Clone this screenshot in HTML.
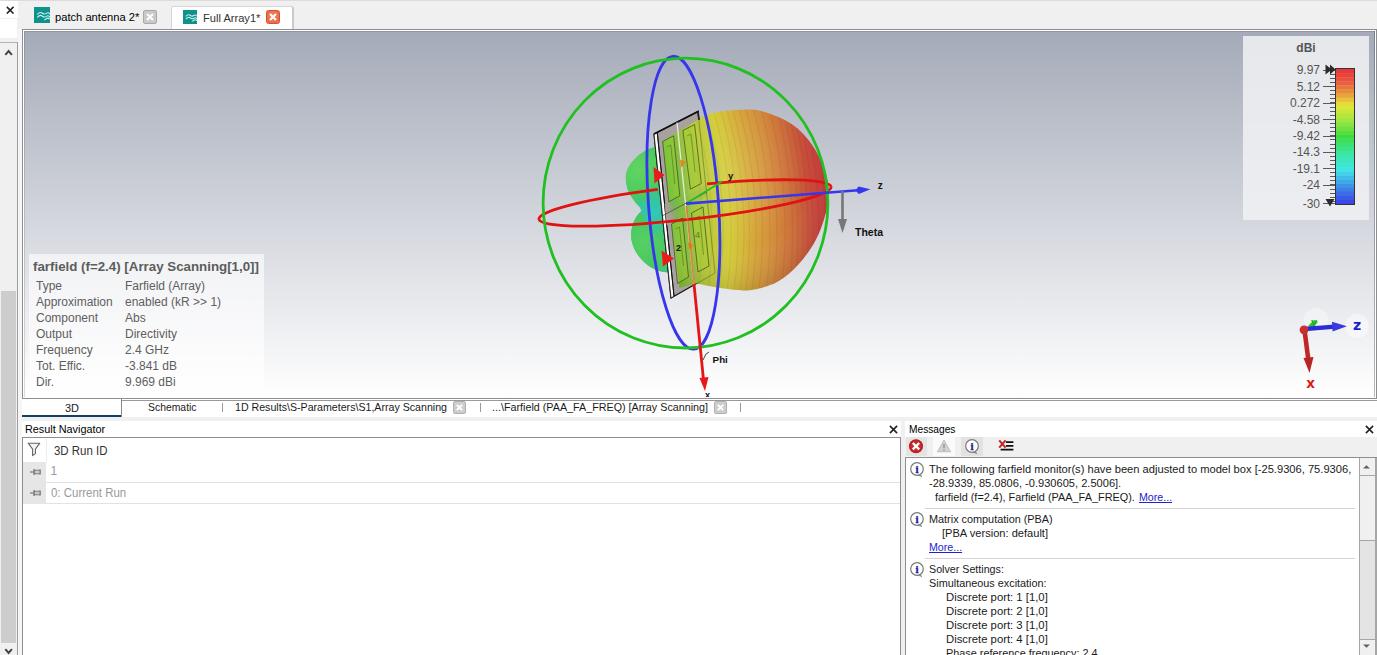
<!DOCTYPE html>
<html>
<head>
<meta charset="utf-8">
<title>Full Array1</title>
<style>
*{box-sizing:border-box;margin:0;padding:0}
html,body{width:1377px;height:655px;overflow:hidden;background:#f0f0f0;font-family:"Liberation Sans","DejaVu Sans",sans-serif;font-size:11px;color:#000}
.abs{position:absolute}
.t{position:absolute;white-space:nowrap;line-height:1;transform-origin:0 50%}
#root{position:relative;width:1377px;height:655px;overflow:hidden;background:#f0f0f0}
/* top tabs */
#topline{left:0;top:0;width:1377px;height:1px;background:#dcdcdc}
.tabtxt{font-size:11px;top:12px;color:#000}
/* viewport */
#vp{left:22px;top:29px;width:1355px;height:370px;border:1px solid #8e8e8e;background:#fff}
#vpin{left:1px;top:1px;width:1351px;height:366px;border:0;background:linear-gradient(to bottom,#a4aab8 0%,#ffffff 100%);overflow:hidden;box-shadow:inset 1px 1px 0 rgba(40,45,70,0.16), inset -1px 0 0 rgba(40,45,70,0.35)}
/* bottom tabs */
#btabs{left:22px;top:399px;width:1355px;height:18px;background:#fff}
.btxt{font-size:11px;top:402px;color:#1a1a1a}
/* panels */
.phead{font-size:11px;color:#000}
.cell{font-size:12px;color:#9a9a9a}
.msg{font-size:11px;color:#1a1a1a;line-height:14px;position:absolute;white-space:nowrap}
.lnk{color:#2222cc;text-decoration:underline}
.sx{display:inline-block;transform-origin:0 50%;transform:scaleX(1.012)}
.info td{font-size:12px;color:#5e5e5e;padding:0;height:16px;line-height:16px;white-space:nowrap}
</style>
</head>
<body>
<div id="root">
  <!-- top strip -->
  <div class="abs" id="topline"></div>
  <div class="abs" style="left:0;top:1px;width:18px;height:17px;background:#fff"></div>
  <div class="abs" style="left:0;top:19px;width:17px;height:19px;background:#fff"></div>
  <svg class="abs" style="left:5.8px;top:5.8px" width="8.4" height="8.4" viewBox="0 0 9 9"><path d="M0.9 0.9 L8.1 8.1 M8.1 0.9 L0.9 8.1" stroke="#222" stroke-width="1.7" fill="none"/></svg>

  <!-- left scrollbar -->
  <div class="abs" style="left:0;top:42px;width:18px;height:613px;background:#f0f0f0;border-right:1px solid #9c9c9c;border-top:1px solid #b4b4b4"></div>
  <div class="abs" style="left:18px;top:29px;width:4px;height:626px;background:#f5f5f5"></div>
  <div class="abs" style="left:1px;top:291px;width:15px;height:352px;background:#cdcdcd"></div>
  <svg class="abs" style="left:4px;top:48.5px" width="9" height="7" viewBox="0 0 9 7"><path d="M1.3 5.8 L4.6 2 L7.9 5.8" stroke="#444" stroke-width="2" fill="none"/></svg>
  <svg class="abs" style="left:4px;top:648px" width="9" height="7" viewBox="0 0 9 7"><path d="M1.3 1.2 L4.6 5 L7.9 1.2" stroke="#444" stroke-width="2" fill="none"/></svg>

  <!-- top tabs -->
  <div class="abs" style="left:171px;top:6px;width:123px;height:23px;background:#fff;border:1px solid #d6d6d6;border-right:2px solid #c9c9c9;border-bottom:0;border-radius:2px 3px 0 0"></div>
  <div class="abs icon" style="left:34px;top:7px;width:16px;height:16px;background:#11918b"></div>
  <svg class="abs" style="left:34px;top:7px" width="16" height="16" viewBox="0 0 16 16"><path d="M3.2 7.3 C4.4 6.2 5.6 5.3 6.8 5.5 C8.2 5.8 9.2 7.2 10.7 7 C12 6.8 12.8 5.8 13.9 5.8 C14.8 5.8 15.4 6.5 16 7 M3.2 10.3 C4.4 9.2 5.6 8.2 6.8 8.4 C8.2 8.7 9.2 10.2 10.7 10 C12 9.8 12.8 8.8 13.9 8.8 C14.8 8.8 15.4 9.5 16 10 M10.2 13 C11.4 12.6 12.6 11.1 13.9 11.1 C14.8 11.1 15.4 11.7 16 12.2" stroke="#c6f6f2" stroke-width="1.1" fill="none"/></svg>
  <div class="t tabtxt" style="left:54.5px;transform:scaleX(1.014)">patch antenna 2*</div>
  <div class="abs" style="left:143px;top:10px;width:14px;height:14px;background:#c9c9c9;border:1px solid #a9a9a9;border-radius:2px"></div>
  <svg class="abs" style="left:143px;top:10px" width="14" height="14" viewBox="0 0 14 14"><path d="M4 4 L10 10 M10 4 L4 10" stroke="#fff" stroke-width="2" fill="none"/></svg>

  <div class="abs icon" style="left:183px;top:10px;width:14px;height:14px;background:#11918b"></div>
  <svg class="abs" style="left:183px;top:10px" width="14" height="14" viewBox="0 0 16 16"><path d="M3.2 7.3 C4.4 6.2 5.6 5.3 6.8 5.5 C8.2 5.8 9.2 7.2 10.7 7 C12 6.8 12.8 5.8 13.9 5.8 C14.8 5.8 15.4 6.5 16 7 M3.2 10.3 C4.4 9.2 5.6 8.2 6.8 8.4 C8.2 8.7 9.2 10.2 10.7 10 C12 9.8 12.8 8.8 13.9 8.8 C14.8 8.8 15.4 9.5 16 10 M10.2 13 C11.4 12.6 12.6 11.1 13.9 11.1 C14.8 11.1 15.4 11.7 16 12.2" stroke="#c6f6f2" stroke-width="1.2" fill="none"/></svg>
  <div class="t tabtxt" style="left:202.8px;top:13px;color:#333;transform:scaleX(1.01)">Full Array1*</div>
  <div class="abs" style="left:266px;top:10px;width:14px;height:14px;background:radial-gradient(circle at 50% 45%,#f28c62 0%,#e9694a 75%);border:1px solid #d2522f;border-radius:2.5px"></div>
  <svg class="abs" style="left:266px;top:10px" width="14" height="14" viewBox="0 0 14 14"><path d="M4 4 L10 10 M10 4 L4 10" stroke="#fff" stroke-width="2" fill="none"/></svg>

  <!-- viewport -->
  <div class="abs" id="vp">
    <div class="abs" id="vpin">
      <svg class="abs" style="left:0;top:0" width="1351" height="366" viewBox="24 31 1351 366">
<defs>
  <radialGradient id="lobeG" gradientUnits="userSpaceOnUse" cx="300" cy="232" r="530">
    <stop offset="0.68" stop-color="#48b848"/>
    <stop offset="0.70" stop-color="#5cbc3e"/>
    <stop offset="0.738" stop-color="#98c83a"/>
    <stop offset="0.768" stop-color="#b8ca3a"/>
    <stop offset="0.811" stop-color="#d4cc3a"/>
    <stop offset="0.837" stop-color="#d6b83a"/>
    <stop offset="0.860" stop-color="#d6a43a"/>
    <stop offset="0.886" stop-color="#d4923c"/>
    <stop offset="0.915" stop-color="#d07a3a"/>
    <stop offset="0.940" stop-color="#ca663a"/>
    <stop offset="0.958" stop-color="#c8523a"/>
    <stop offset="0.979" stop-color="#c6403a"/>
    <stop offset="1" stop-color="#be3838"/>
  </radialGradient>
  <radialGradient id="lobeS" gradientUnits="userSpaceOnUse" cx="735" cy="175" r="120">
    <stop offset="0" stop-color="#fff" stop-opacity="0.10"/>
    <stop offset="0.6" stop-color="#fff" stop-opacity="0"/>
    <stop offset="1" stop-color="#000" stop-opacity="0.12"/>
  </radialGradient>
  <radialGradient id="backG1" gradientUnits="userSpaceOnUse" cx="638" cy="170" r="42">
    <stop offset="0" stop-color="#62d462"/>
    <stop offset="0.6" stop-color="#4ccb5e"/>
    <stop offset="1" stop-color="#3cc27a"/>
  </radialGradient>
  <radialGradient id="backG2" gradientUnits="userSpaceOnUse" cx="645" cy="242" r="42">
    <stop offset="0" stop-color="#56d062"/>
    <stop offset="0.6" stop-color="#48c862"/>
    <stop offset="1" stop-color="#3cc288"/>
  </radialGradient>
  <radialGradient id="cyanR" gradientUnits="userSpaceOnUse" cx="654" cy="212" r="30"><stop offset="0" stop-color="#2ec8c0" stop-opacity="0.95"/><stop offset="0.55" stop-color="#30c6a8" stop-opacity="0.7"/><stop offset="1" stop-color="#38c480" stop-opacity="0"/></radialGradient>
  <linearGradient id="barFade" gradientUnits="userSpaceOnUse" x1="665" y1="214" x2="679" y2="208"><stop offset="0" stop-color="#a9a19f" stop-opacity="1"/><stop offset="0.45" stop-color="#a0a08a" stop-opacity="0.8"/><stop offset="1" stop-color="#98a070" stop-opacity="0"/></linearGradient>
  <linearGradient id="cyanG" gradientUnits="userSpaceOnUse" x1="640" y1="190" x2="660" y2="225">
    <stop offset="0" stop-color="#35c79a" stop-opacity="0"/>
    <stop offset="0.5" stop-color="#2ec7b4" stop-opacity="0.9"/>
    <stop offset="1" stop-color="#35c79a" stop-opacity="0"/>
  </linearGradient>
  <linearGradient id="barG" x1="0" y1="0" x2="0" y2="1">
    <stop offset="0" stop-color="#e8323c"/>
    <stop offset="0.10" stop-color="#ea5a3c"/>
    <stop offset="0.18" stop-color="#e8963c"/>
    <stop offset="0.27" stop-color="#e6e63c"/>
    <stop offset="0.38" stop-color="#a0e63c"/>
    <stop offset="0.50" stop-color="#3cdc3c"/>
    <stop offset="0.62" stop-color="#3ce6a0"/>
    <stop offset="0.74" stop-color="#3ce6e6"/>
    <stop offset="0.85" stop-color="#3c96e6"/>
    <stop offset="1" stop-color="#3c3ce6"/>
  </linearGradient>
</defs>

<!-- back lobes -->
<path d="M660 146 C648 147 636 155 629 166 C623.5 175 625 188 632 198 C636 204 640 207 643 210 C637 214 632 222 631 234 C631 248 640 261 652 268 C660 272 666 273 671 272 L678 250 L672 150 Z" fill="url(#backG1)"/>
<path d="M643 210 C637 214 632 222 631 234 C631 248 640 261 652 268 C660 272 666 273 671 272 L678 250 L670 205 Z" fill="url(#backG2)"/>
<path d="M636 193 C641 199 645 203 649 204 L652 178 L660 170 L668 245 C658 240 648 228 642 214 C640 208 637 200 636 193 Z" fill="url(#cyanR)"/>
<!-- panel -->
<polygon points="654,134 698,111.5 715,273 671,298" fill="#a9a19f" stroke="#111" stroke-width="1.2" stroke-linejoin="miter"/>

<!-- main lobe -->
<path d="M699.0 119.0 C701.3 118.0 706.7 114.5 713.0 113.0 C719.3 111.5 729.0 110.3 737.0 110.0 C745.0 109.7 751.9 108.7 761.0 111.0 C770.1 113.3 783.1 118.4 791.6 124.0 C800.1 129.6 806.6 137.2 812.0 144.7 C817.4 152.1 821.2 161.3 824.0 168.7 C826.8 176.1 828.2 181.6 828.5 189.0 C828.8 196.4 828.0 204.4 825.8 213.0 C823.6 221.6 820.1 231.9 815.5 240.5 C810.9 249.1 804.6 257.6 798.4 264.5 C792.1 271.4 785.4 277.4 778.0 281.6 C770.6 285.8 760.9 288.1 754.0 289.5 C747.1 290.9 743.6 290.5 736.8 290.0 C730.0 289.5 719.8 287.8 713.0 286.7 C706.2 285.6 698.7 283.9 695.8 283.3 L679.5 288 L662.5 141.5 Z" fill="url(#lobeG)"/>
<path d="M699.0 119.0 C701.3 118.0 706.7 114.5 713.0 113.0 C719.3 111.5 729.0 110.3 737.0 110.0 C745.0 109.7 751.9 108.7 761.0 111.0 C770.1 113.3 783.1 118.4 791.6 124.0 C800.1 129.6 806.6 137.2 812.0 144.7 C817.4 152.1 821.2 161.3 824.0 168.7 C826.8 176.1 828.2 181.6 828.5 189.0 C828.8 196.4 828.0 204.4 825.8 213.0 C823.6 221.6 820.1 231.9 815.5 240.5 C810.9 249.1 804.6 257.6 798.4 264.5 C792.1 271.4 785.4 277.4 778.0 281.6 C770.6 285.8 760.9 288.1 754.0 289.5 C747.1 290.9 743.6 290.5 736.8 290.0 C730.0 289.5 719.8 287.8 713.0 286.7 C706.2 285.6 698.7 283.9 695.8 283.3 L679.5 288 L662.5 141.5 Z" fill="url(#lobeS)"/>
<clipPath id="lobeClip"><path d="M699.0 119.0 C701.3 118.0 706.7 114.5 713.0 113.0 C719.3 111.5 729.0 110.3 737.0 110.0 C745.0 109.7 751.9 108.7 761.0 111.0 C770.1 113.3 783.1 118.4 791.6 124.0 C800.1 129.6 806.6 137.2 812.0 144.7 C817.4 152.1 821.2 161.3 824.0 168.7 C826.8 176.1 828.2 181.6 828.5 189.0 C828.8 196.4 828.0 204.4 825.8 213.0 C823.6 221.6 820.1 231.9 815.5 240.5 C810.9 249.1 804.6 257.6 798.4 264.5 C792.1 271.4 785.4 277.4 778.0 281.6 C770.6 285.8 760.9 288.1 754.0 289.5 C747.1 290.9 743.6 290.5 736.8 290.0 C730.0 289.5 719.8 287.8 713.0 286.7 C706.2 285.6 698.7 283.9 695.8 283.3 L679.5 288 L662.5 141.5 Z"/></clipPath>
<g clip-path="url(#lobeClip)" fill="none" stroke="#3a2a10" stroke-opacity="0.07" stroke-width="1.2"><circle cx="300" cy="232" r="402" /><circle cx="300" cy="232" r="412" /><circle cx="300" cy="232" r="423" /><circle cx="300" cy="232" r="431" /><circle cx="300" cy="232" r="438" /><circle cx="300" cy="232" r="444" /><circle cx="300" cy="232" r="449.6" /><circle cx="300" cy="232" r="456" /><circle cx="300" cy="232" r="462.5" /><circle cx="300" cy="232" r="470" /><circle cx="300" cy="232" r="477" /><circle cx="300" cy="232" r="485" /><circle cx="300" cy="232" r="492.6" /><circle cx="300" cy="232" r="498" /><circle cx="300" cy="232" r="503" /><circle cx="300" cy="232" r="508" /><circle cx="300" cy="232" r="513" /><circle cx="300" cy="232" r="519" /><circle cx="300" cy="232" r="525.7" /></g>

<!-- panel edges -->
<polygon points="654,134 657.2,132.6 674,296.2 671,298" fill="#fff" stroke="#111" stroke-width="0.8"/>
<polyline points="654,134 698,111.5 699,120" fill="none" stroke="#111" stroke-width="1.6"/>
<line x1="657.4" y1="132.8" x2="674" y2="296" stroke="#111" stroke-width="1"/>
<!-- substrate seen through lobe: strips between patches -->
<polygon points="674.5,135 682,131 698,281 690,285" fill="#8fa070" opacity="0.22"/>
<polygon points="664,208 707,185 708,196 665,219" fill="#8fa070" opacity="0.18"/>
<polygon points="664.6,204 677,197.5 679,219 666.8,225.5" fill="url(#barFade)"/>
<!-- centre split lines -->
<line x1="677" y1="122.5" x2="694" y2="285" stroke="#f0f4d8" stroke-width="1.3" opacity="0.9"/>
<line x1="663" y1="215.5" x2="707" y2="192" stroke="#3d4d1f" stroke-width="0.9" opacity="0.8"/>
<!-- patches -->
<g fill="#a6cc33" fill-opacity="0.4" stroke="#33451a" stroke-width="0.9" stroke-opacity="0.75">
  <polygon points="662.7,141.5 673.6,135.8 679.8,195.8 668.8,201.8"/>
  <polygon points="682.9,130.5 694.6,124.5 701.3,183.5 690.4,189.2"/>
  <polygon points="671.5,224 682.5,218 688.5,277 677.5,283.5"/>
  <polygon points="691.5,213 703,207 709,266 698,272"/>
</g>
<g fill="none" stroke="#3a4d1c" stroke-width="0.8" stroke-opacity="0.55">
  <polyline points="698,111.5 715,273 697,283.5"/>
  <polyline points="666.8,147 670.8,145 674.8,184"/>
  <polyline points="687,136 691,134 695,172"/>
  <polyline points="675.5,229 679.5,227 683.5,266"/>
  <polyline points="695.5,218 699.5,216 703.5,255"/>
</g>

<!-- port arrows -->
<polygon points="653.5,167 664.5,175 654.5,183.5" fill="#e81c1c"/>
<polygon points="661.5,250.5 674,258.5 663,266.5" fill="#e81c1c"/>
<polygon points="680,159.5 686,162 681,167.5" fill="#e08a1c"/>
<polygon points="688,242 694,245 689.5,250" fill="#e08a1c"/>
<text x="676" y="250.5" font-family="Liberation Sans, sans-serif" font-size="9" font-weight="bold" fill="#111">2</text>
<text x="695" y="238" font-family="Liberation Sans, sans-serif" font-size="9" font-weight="bold" fill="#7a8a3a">4</text>

<!-- great circles -->
<ellipse cx="683.4" cy="202.7" rx="35" ry="146.8" transform="rotate(-4.1 683.4 202.7)" fill="none" stroke="#3636ee" stroke-width="2.8"/>
<g transform="rotate(-6.3 685 203)" fill="none" stroke="#e01212" stroke-width="2.8">
  <path d="M538 203 A147 16.8 0 0 1 659.5 186.5"/>
  <path d="M709 186.4 A147 16.8 0 0 1 832 203"/>
  <path d="M832 203 A147 16.8 0 0 1 538 203"/>
</g>
<ellipse cx="685.5" cy="203.1" rx="142.4" ry="144.9" fill="none" stroke="#20c020" stroke-width="2.8"/>

<!-- axes -->
<line x1="686" y1="203.5" x2="722" y2="181.5" stroke="#22c022" stroke-width="1.6"/>
<line x1="686" y1="203.6" x2="858" y2="190.3" stroke="#3636ee" stroke-width="2.6"/>
<polygon points="855.5,190.4 858.5,186.4 870.5,189.3 858.8,193.9" fill="#3636ee"/>
<line x1="686.3" y1="206" x2="694" y2="284" stroke="#d86a1c" stroke-width="1.6" opacity="0.75"/>
<line x1="694" y1="284" x2="703.5" y2="380" stroke="#e61414" stroke-width="2.8"/>
<polygon points="699.5,378 708.5,377 705,391" fill="#e81818"/>
<line x1="842.5" y1="191" x2="842.5" y2="222" stroke="#777" stroke-width="2.6"/>
<polygon points="838,219 847,219 842.5,233" fill="#777"/>
<g font-family="Liberation Sans, sans-serif" font-weight="bold" fill="#111">
  <text x="728" y="179" font-size="9.5">y</text>
  <text x="877.8" y="189.3" font-size="10">z</text>
  <text x="855" y="236" font-size="10.5">Theta</text>
  <text x="712.6" y="363.2" font-size="9.8">Phi</text>
  <text x="705" y="397.8" font-size="9">x</text>
</g>
<path d="M703 360 L706 354 L709 352" fill="none" stroke="#444" stroke-width="1"/>

<rect x="1243" y="36" width="126" height="184" fill="#eff0f3" opacity="0.88"/>
<text x="1306" y="52" text-anchor="middle" font-family="Liberation Sans, sans-serif" font-weight="bold" font-size="12" fill="#555">dBi</text>
<text x="1320" y="73.9" text-anchor="end" font-family="Liberation Sans, sans-serif" font-size="12" fill="#555">9.97</text>
<text x="1320" y="90.7" text-anchor="end" font-family="Liberation Sans, sans-serif" font-size="12" fill="#555">5.12</text>
<text x="1320" y="106.8" text-anchor="end" font-family="Liberation Sans, sans-serif" font-size="12" fill="#555">0.272</text>
<text x="1320" y="123.6" text-anchor="end" font-family="Liberation Sans, sans-serif" font-size="12" fill="#555">-4.58</text>
<text x="1320" y="139.8" text-anchor="end" font-family="Liberation Sans, sans-serif" font-size="12" fill="#555">-9.42</text>
<text x="1320" y="156.0" text-anchor="end" font-family="Liberation Sans, sans-serif" font-size="12" fill="#555">-14.3</text>
<text x="1320" y="172.7" text-anchor="end" font-family="Liberation Sans, sans-serif" font-size="12" fill="#555">-19.1</text>
<text x="1320" y="188.9" text-anchor="end" font-family="Liberation Sans, sans-serif" font-size="12" fill="#555">-24</text>
<text x="1320" y="207.5" text-anchor="end" font-family="Liberation Sans, sans-serif" font-size="12" fill="#555">-30</text>
<rect x="1336" y="69.00" width="18" height="4.39" fill="#e8383c"/>
<rect x="1336" y="73.09" width="18" height="4.39" fill="#e9443c"/>
<rect x="1336" y="77.18" width="18" height="4.39" fill="#ea503c"/>
<rect x="1336" y="81.27" width="18" height="4.39" fill="#ea5f3c"/>
<rect x="1336" y="85.36" width="18" height="4.39" fill="#e9753c"/>
<rect x="1336" y="89.45" width="18" height="4.39" fill="#e88c3c"/>
<rect x="1336" y="93.55" width="18" height="4.39" fill="#e8a53c"/>
<rect x="1336" y="97.64" width="18" height="4.39" fill="#e7c03c"/>
<rect x="1336" y="101.73" width="18" height="4.39" fill="#e6db3c"/>
<rect x="1336" y="105.82" width="18" height="4.39" fill="#dbe63c"/>
<rect x="1336" y="109.91" width="18" height="4.39" fill="#c7e63c"/>
<rect x="1336" y="114.00" width="18" height="4.39" fill="#b4e63c"/>
<rect x="1336" y="118.09" width="18" height="4.39" fill="#a1e63c"/>
<rect x="1336" y="122.18" width="18" height="4.39" fill="#88e43c"/>
<rect x="1336" y="126.27" width="18" height="4.39" fill="#6fe13c"/>
<rect x="1336" y="130.36" width="18" height="4.39" fill="#55df3c"/>
<rect x="1336" y="134.45" width="18" height="4.39" fill="#3cdc3c"/>
<rect x="1336" y="138.55" width="18" height="4.39" fill="#3cdf55"/>
<rect x="1336" y="142.64" width="18" height="4.39" fill="#3ce16f"/>
<rect x="1336" y="146.73" width="18" height="4.39" fill="#3ce488"/>
<rect x="1336" y="150.82" width="18" height="4.39" fill="#3ce6a1"/>
<rect x="1336" y="154.91" width="18" height="4.39" fill="#3ce6b1"/>
<rect x="1336" y="159.00" width="18" height="4.39" fill="#3ce6c1"/>
<rect x="1336" y="163.09" width="18" height="4.39" fill="#3ce6d2"/>
<rect x="1336" y="167.18" width="18" height="4.39" fill="#3ce6e2"/>
<rect x="1336" y="171.27" width="18" height="4.39" fill="#3cd5e6"/>
<rect x="1336" y="175.36" width="18" height="4.39" fill="#3cbfe6"/>
<rect x="1336" y="179.45" width="18" height="4.39" fill="#3ca9e6"/>
<rect x="1336" y="183.55" width="18" height="4.39" fill="#3c94e6"/>
<rect x="1336" y="187.64" width="18" height="4.39" fill="#3c80e6"/>
<rect x="1336" y="191.73" width="18" height="4.39" fill="#3c6de6"/>
<rect x="1336" y="195.82" width="18" height="4.39" fill="#3c59e6"/>
<rect x="1336" y="199.91" width="18" height="4.39" fill="#3c46e6"/>
<rect x="1335.5" y="68.5" width="19" height="136" fill="none" stroke="#333" stroke-width="1"/>
<line x1="1330" y1="70.5" x2="1335" y2="70.5" stroke="#5a5a5a" stroke-width="1"/>
<line x1="1330" y1="74.5" x2="1335" y2="74.5" stroke="#5a5a5a" stroke-width="1"/>
<line x1="1330" y1="78.5" x2="1335" y2="78.5" stroke="#5a5a5a" stroke-width="1"/>
<line x1="1330" y1="82.5" x2="1335" y2="82.5" stroke="#5a5a5a" stroke-width="1"/>
<line x1="1330" y1="86.5" x2="1335" y2="86.5" stroke="#5a5a5a" stroke-width="1"/>
<line x1="1330" y1="90.5" x2="1335" y2="90.5" stroke="#5a5a5a" stroke-width="1"/>
<line x1="1330" y1="94.5" x2="1335" y2="94.5" stroke="#5a5a5a" stroke-width="1"/>
<line x1="1330" y1="98.5" x2="1335" y2="98.5" stroke="#5a5a5a" stroke-width="1"/>
<line x1="1330" y1="102.5" x2="1335" y2="102.5" stroke="#5a5a5a" stroke-width="1"/>
<line x1="1330" y1="107.5" x2="1335" y2="107.5" stroke="#5a5a5a" stroke-width="1"/>
<line x1="1330" y1="111.5" x2="1335" y2="111.5" stroke="#5a5a5a" stroke-width="1"/>
<line x1="1330" y1="115.5" x2="1335" y2="115.5" stroke="#5a5a5a" stroke-width="1"/>
<line x1="1330" y1="119.5" x2="1335" y2="119.5" stroke="#5a5a5a" stroke-width="1"/>
<line x1="1330" y1="123.5" x2="1335" y2="123.5" stroke="#5a5a5a" stroke-width="1"/>
<line x1="1330" y1="127.5" x2="1335" y2="127.5" stroke="#5a5a5a" stroke-width="1"/>
<line x1="1330" y1="131.5" x2="1335" y2="131.5" stroke="#5a5a5a" stroke-width="1"/>
<line x1="1330" y1="135.5" x2="1335" y2="135.5" stroke="#5a5a5a" stroke-width="1"/>
<line x1="1330" y1="139.5" x2="1335" y2="139.5" stroke="#5a5a5a" stroke-width="1"/>
<line x1="1330" y1="144.5" x2="1335" y2="144.5" stroke="#5a5a5a" stroke-width="1"/>
<line x1="1330" y1="148.5" x2="1335" y2="148.5" stroke="#5a5a5a" stroke-width="1"/>
<line x1="1330" y1="152.5" x2="1335" y2="152.5" stroke="#5a5a5a" stroke-width="1"/>
<line x1="1330" y1="156.5" x2="1335" y2="156.5" stroke="#5a5a5a" stroke-width="1"/>
<line x1="1330" y1="160.5" x2="1335" y2="160.5" stroke="#5a5a5a" stroke-width="1"/>
<line x1="1330" y1="164.5" x2="1335" y2="164.5" stroke="#5a5a5a" stroke-width="1"/>
<line x1="1330" y1="168.5" x2="1335" y2="168.5" stroke="#5a5a5a" stroke-width="1"/>
<line x1="1330" y1="172.5" x2="1335" y2="172.5" stroke="#5a5a5a" stroke-width="1"/>
<line x1="1330" y1="176.5" x2="1335" y2="176.5" stroke="#5a5a5a" stroke-width="1"/>
<line x1="1330" y1="180.5" x2="1335" y2="180.5" stroke="#5a5a5a" stroke-width="1"/>
<line x1="1330" y1="184.5" x2="1335" y2="184.5" stroke="#5a5a5a" stroke-width="1"/>
<line x1="1330" y1="189.5" x2="1335" y2="189.5" stroke="#5a5a5a" stroke-width="1"/>
<line x1="1330" y1="193.5" x2="1335" y2="193.5" stroke="#5a5a5a" stroke-width="1"/>
<line x1="1330" y1="197.5" x2="1335" y2="197.5" stroke="#5a5a5a" stroke-width="1"/>
<line x1="1330" y1="201.5" x2="1335" y2="201.5" stroke="#5a5a5a" stroke-width="1"/>
<line x1="1323" y1="70.5" x2="1335" y2="70.5" stroke="#5a5a5a" stroke-width="1"/>
<line x1="1323" y1="86.5" x2="1335" y2="86.5" stroke="#5a5a5a" stroke-width="1"/>
<line x1="1323" y1="103.5" x2="1335" y2="103.5" stroke="#5a5a5a" stroke-width="1"/>
<line x1="1323" y1="119.5" x2="1335" y2="119.5" stroke="#5a5a5a" stroke-width="1"/>
<line x1="1323" y1="136.5" x2="1335" y2="136.5" stroke="#5a5a5a" stroke-width="1"/>
<line x1="1323" y1="152.5" x2="1335" y2="152.5" stroke="#5a5a5a" stroke-width="1"/>
<line x1="1323" y1="168.5" x2="1335" y2="168.5" stroke="#5a5a5a" stroke-width="1"/>
<line x1="1323" y1="185.5" x2="1335" y2="185.5" stroke="#5a5a5a" stroke-width="1"/>
<line x1="1323" y1="203.5" x2="1335" y2="203.5" stroke="#5a5a5a" stroke-width="1"/>
<polygon points="1325.5,64.5 1330,68 1330,64.5 1335.5,69.5 1330,74.5 1330,71 1325.5,74.5" fill="#2a2a2a"/>
<polygon points="1325.5,199 1334.5,199 1330,206.5" fill="#2a2a2a"/>
<!-- axis gizmo -->
<circle cx="1316" cy="320" r="12" fill="#fff" opacity="0.35"/>
<circle cx="1357" cy="326" r="12" fill="#fff" opacity="0.45"/>
<circle cx="1310" cy="384" r="11" fill="#fff" opacity="0.3"/>
<path d="M1308 326 L1314 320 L1318 322 L1312 328 Z" fill="#2fc42f"/>
<text x="1311" y="326" font-family="Liberation Sans, sans-serif" font-weight="bold" font-size="11" fill="#22b022">y</text>
<line x1="1305" y1="329" x2="1335" y2="326.6" stroke="#2b2bd8" stroke-width="4.4"/>
<polygon points="1332,321.8 1347,326.2 1332.6,331.4" fill="#3a3ae0"/>
<line x1="1304.5" y1="330" x2="1308.5" y2="361" stroke="#c02828" stroke-width="4.6"/>
<polygon points="1303.5,358 1313.5,357 1309.5,373" fill="#b82424"/>
<circle cx="1304" cy="329.8" r="4.4" fill="#c83030"/>
<text x="1357" y="330" text-anchor="middle" font-family="DejaVu Sans, sans-serif" font-weight="bold" font-size="14" fill="#1c1cd0">z</text>
<text x="1310.5" y="387.8" text-anchor="middle" font-family="DejaVu Sans, sans-serif" font-weight="bold" font-size="13.5" fill="#e01818">x</text>

</svg>

    </div>
  </div>
  <div class="abs" style="left:29px;top:254px;width:235px;height:139px;background:rgba(255,255,255,0.62)"></div>
<div class="t" style="left:33.3px;top:260px;font-size:13px;font-weight:bold;color:#5c5c5c;transform:scaleX(1.024)" id="ititle">farfield (f=2.4) [Array Scanning[1,0]]</div>
<table class="info abs" style="left:36px;top:278px;border-collapse:collapse">
<tr><td style="width:89px">Type</td><td>Farfield (Array)</td></tr>
<tr><td>Approximation</td><td>enabled (kR &gt;&gt; 1)</td></tr>
<tr><td>Component</td><td>Abs</td></tr>
<tr><td>Output</td><td>Directivity</td></tr>
<tr><td>Frequency</td><td>2.4 GHz</td></tr>
<tr><td>Tot. Effic.</td><td>-3.841 dB</td></tr>
<tr><td>Dir.</td><td>9.969 dBi</td></tr>
</table>


  <!-- bottom tabs -->
  <div class="abs" id="btabs"></div>
  <div class="abs" style="left:121px;top:400px;width:1256px;height:1px;background:#9a9a9a"></div>
  <div class="abs" style="left:22px;top:415px;width:100px;height:2px;background:#123f63"></div>
  <div class="abs" style="left:121px;top:399px;width:1px;height:18px;background:#8a8a8a"></div>
  <div class="t btxt" style="left:65px;top:403px">3D</div>
  <div class="t btxt" style="left:147.6px;transform:scaleX(0.945)">Schematic</div>
  <div class="t btxt" style="left:234.8px;transform:scaleX(0.966)">1D Results\S-Parameters\S1,Array Scanning</div>
  <div class="t btxt" style="left:492.4px;transform:scaleX(0.977)">...\Farfield (PAA_FA_FREQ) [Array Scanning]</div>

  <!-- Result Navigator -->
  <div class="abs" style="left:22px;top:421px;width:879px;height:16px;background:#fff"></div>
  <div class="t phead" style="left:25.2px;top:424px;transform:scaleX(0.985)">Result Navigator</div>
  <div class="abs" style="left:22px;top:437px;width:879px;height:218px;background:#fff;border:1px solid #8e8e8e;border-bottom:0"></div>
  <div class="t" style="left:54.4px;top:445px;font-size:12px;color:#333;transform:scaleX(0.955)">3D Run ID</div>
  <div class="abs" style="left:23px;top:462px;width:23px;height:42px;background:#e6e6e6"></div>
  <div class="abs" style="left:46px;top:482px;width:854px;height:1px;background:#e2e2e2"></div>
  <div class="abs" style="left:46px;top:503px;width:854px;height:1px;background:#e2e2e2"></div>
  <div class="t cell" style="left:50.5px;top:465px">1</div>
  <div class="t cell" style="left:50.5px;top:486.5px;transform:scaleX(0.955)">0: Current Run</div>

  <!-- Messages -->
  <div class="abs" style="left:905px;top:421px;width:472px;height:16px;background:#fff"></div>
  <div class="t phead" style="left:908.5px;top:424px;transform:scaleX(0.925)">Messages</div>
  <div class="abs" style="left:905px;top:457px;width:472px;height:198px;background:#fff;border:1px solid #8e8e8e;border-bottom:0"></div>
  <div class="abs" style="left:906px;top:437px;width:21px;height:19px;background:#e4e4e4"></div>
<div class="abs" style="left:933px;top:437px;width:22px;height:19px;background:#fafafa"></div>
<div class="abs" style="left:961px;top:437px;width:22px;height:19px;background:#e2e2e2"></div>
<svg class="abs" style="left:908px;top:438px" width="16" height="16" viewBox="0 0 16 16"><circle cx="8" cy="8.2" r="7" fill="#c9282d"/><circle cx="8" cy="8.2" r="6.2" fill="none" stroke="#a81c20" stroke-width="0.8"/><path d="M4.8 5 L11.2 11.4 M11.2 5 L4.8 11.4" stroke="#fff" stroke-width="2.4" fill="none"/></svg>
<svg class="abs" style="left:936px;top:439px" width="16" height="14" viewBox="0 0 16 14"><path d="M8 1.2 L14.6 12.8 L1.4 12.8 Z" fill="#d2d2d2" stroke="#b4b4b4" stroke-width="0.8"/><path d="M8 5 L8 9.2 M8 10.4 L8 11.8" stroke="#9a9a9a" stroke-width="1.6"/></svg>
<svg class="abs" style="left:963px;top:437px" width="18" height="18" viewBox="0 0 18 18"><path d="M11.5 14.2 L13.8 16.4 L10 15.2 Z" fill="#fff" stroke="#666" stroke-width="0.8"/><circle cx="9" cy="9" r="6.3" fill="#fff" stroke="#7a7a7a" stroke-width="1.2"/><text x="9" y="12.6" text-anchor="middle" font-family="Liberation Serif, serif" font-weight="bold" font-size="11" fill="#1a1a9a" stroke="#1a1a9a" stroke-width="0.3">i</text></svg>
<svg class="abs" style="left:998px;top:439px" width="17" height="13" viewBox="0 0 17 13"><path d="M1.2 1.4 L7.6 8.6 M7.6 1.4 L1.2 8.6" stroke="#c0282c" stroke-width="2.1" fill="none"/><path d="M8 3.2 L15.4 3.2 M8 6.8 L15.4 6.8 M2.6 10.6 L15.4 10.6" stroke="#111" stroke-width="1.8" fill="none"/></svg>
<svg class="abs" style="left:889px;top:425px" width="9" height="9" viewBox="0 0 9 9"><path d="M0.9 0.9 L8.1 8.1 M8.1 0.9 L0.9 8.1" stroke="#222" stroke-width="1.6" fill="none"/></svg>
<svg class="abs" style="left:1365px;top:425px" width="9" height="9" viewBox="0 0 9 9"><path d="M0.9 0.9 L8.1 8.1 M8.1 0.9 L0.9 8.1" stroke="#222" stroke-width="1.6" fill="none"/></svg>
<div class="abs" style="left:1359px;top:458px;width:18px;height:197px;background:#e4e4e4;border-left:1px solid #a6a6a6;border-right:2px solid #a6a6a6"></div>
<div class="abs" style="left:1360px;top:458px;width:15px;height:18px;background:#f0f0f0;border-bottom:1px solid #a6a6a6"></div>
<div class="abs" style="left:1360px;top:476px;width:15px;height:65px;background:#f0f0f0;border-bottom:1px solid #a6a6a6"></div>
<div class="abs" style="left:1360px;top:639px;width:15px;height:16px;background:#f0f0f0;border-top:1px solid #a6a6a6"></div>
<svg class="abs" style="left:1363px;top:465px" width="7" height="4" viewBox="0 0 7 4"><path d="M0 3.6 L3.5 0.2 L7 3.6 Z" fill="#606060"/></svg>
<svg class="abs" style="left:1363px;top:644px" width="7" height="4" viewBox="0 0 7 4"><path d="M0 0.4 L3.5 3.8 L7 0.4 Z" fill="#606060"/></svg>
<svg class="abs" style="left:908px;top:460px" width="18" height="18" viewBox="0 0 18 18"><path d="M11.5 14.2 L13.8 16.4 L10 15.2 Z" fill="#fff" stroke="#666" stroke-width="0.8"/><circle cx="9" cy="9" r="6.3" fill="#fff" stroke="#7a7a7a" stroke-width="1.2"/><text x="9" y="12.6" text-anchor="middle" font-family="Liberation Serif, serif" font-weight="bold" font-size="11" fill="#1a1a9a" stroke="#1a1a9a" stroke-width="0.3">i</text></svg>
<svg class="abs" style="left:908px;top:510px" width="18" height="18" viewBox="0 0 18 18"><path d="M11.5 14.2 L13.8 16.4 L10 15.2 Z" fill="#fff" stroke="#666" stroke-width="0.8"/><circle cx="9" cy="9" r="6.3" fill="#fff" stroke="#7a7a7a" stroke-width="1.2"/><text x="9" y="12.6" text-anchor="middle" font-family="Liberation Serif, serif" font-weight="bold" font-size="11" fill="#1a1a9a" stroke="#1a1a9a" stroke-width="0.3">i</text></svg>
<svg class="abs" style="left:908px;top:560px" width="18" height="18" viewBox="0 0 18 18"><path d="M11.5 14.2 L13.8 16.4 L10 15.2 Z" fill="#fff" stroke="#666" stroke-width="0.8"/><circle cx="9" cy="9" r="6.3" fill="#fff" stroke="#7a7a7a" stroke-width="1.2"/><text x="9" y="12.6" text-anchor="middle" font-family="Liberation Serif, serif" font-weight="bold" font-size="11" fill="#1a1a9a" stroke="#1a1a9a" stroke-width="0.3">i</text></svg>
<div class="abs" style="left:925px;top:508px;width:430px;height:1px;background:#d4d4d4"></div>
<div class="abs" style="left:925px;top:558px;width:430px;height:1px;background:#d4d4d4"></div>
<div class="msg" style="left:928.7px;top:461.79px"><span class="sx" style="transform:scaleX(1.0126)">The following farfield monitor(s) have been adjusted to model box [-25.9306, 75.9306,</span></div>
<div class="msg" style="left:928.7px;top:475.89px"><span class="sx" style="transform:scaleX(1.0072)">-28.9339, 85.0806, -0.930605, 2.5006].</span></div>
<div class="msg" style="left:935.4px;top:489.89px"><span class="sx" style="transform:scaleX(0.9904)">farfield (f=2.4), Farfield (PAA_FA_FREQ).</span></div>
<div class="msg" style="left:1139.2px;top:489.89px"><span class="sx" style="transform:scaleX(0.9669)"><span class="lnk">More...</span></span></div>
<div class="msg" style="left:928.7px;top:511.79px"><span class="sx" style="transform:scaleX(0.9870)">Matrix computation (PBA)</span></div>
<div class="msg" style="left:942.4px;top:525.89px"><span class="sx" style="transform:scaleX(1.0079)">[PBA version: default]</span></div>
<div class="msg" style="left:928.7px;top:539.69px"><span class="sx" style="transform:scaleX(0.9669)"><span class="lnk">More...</span></span></div>
<div class="msg" style="left:928.7px;top:561.99px"><span class="sx" style="transform:scaleX(0.9721)">Solver Settings:</span></div>
<div class="msg" style="left:928.7px;top:575.89px"><span class="sx" style="transform:scaleX(0.9863)">Simultaneous excitation:</span></div>
<div class="msg" style="left:945.9px;top:589.89px"><span class="sx" style="transform:scaleX(1.0278)">Discrete port: 1 [1,0]</span></div>
<div class="msg" style="left:945.9px;top:603.79px"><span class="sx" style="transform:scaleX(1.0278)">Discrete port: 2 [1,0]</span></div>
<div class="msg" style="left:945.9px;top:617.79px"><span class="sx" style="transform:scaleX(1.0278)">Discrete port: 3 [1,0]</span></div>
<div class="msg" style="left:945.9px;top:631.69px"><span class="sx" style="transform:scaleX(1.0278)">Discrete port: 4 [1,0]</span></div>
<div class="msg" style="left:945.9px;top:645.59px"><span class="sx" style="transform:scaleX(0.9877)">Phase reference frequency: 2.4</span></div>
  <!-- bottom tab separators & close boxes -->
<div class="abs" style="left:222px;top:403px;width:1px;height:9px;background:#9a9a9a"></div>
<div class="abs" style="left:480px;top:403px;width:1px;height:9px;background:#9a9a9a"></div>
<div class="abs" style="left:740px;top:403px;width:1px;height:9px;background:#9a9a9a"></div>
<svg class="abs" style="left:453px;top:401px" width="13" height="13" viewBox="0 0 13 13"><rect x="0.5" y="0.5" width="12" height="12" rx="1.5" fill="#cdcdcd" stroke="#b0b0b0"/><path d="M3.8 3.8 L9.2 9.2 M9.2 3.8 L3.8 9.2" stroke="#fff" stroke-width="1.9" fill="none"/></svg>
<svg class="abs" style="left:714px;top:401px" width="13" height="13" viewBox="0 0 13 13"><rect x="0.5" y="0.5" width="12" height="12" rx="1.5" fill="#cdcdcd" stroke="#b0b0b0"/><path d="M3.8 3.8 L9.2 9.2 M9.2 3.8 L3.8 9.2" stroke="#fff" stroke-width="1.9" fill="none"/></svg>
<!-- filter icon -->
<svg class="abs" style="left:27px;top:442px" width="14" height="15" viewBox="0 0 14 15"><path d="M1.2 1.2 L12.8 1.2 L8.4 7.2 L8.4 11.6 L5.6 13.6 L5.6 7.2 Z" fill="#f4f4f4" stroke="#666" stroke-width="1.1" stroke-linejoin="round"/></svg>
<div class="abs" style="left:46px;top:439px;width:1px;height:23px;background:#ececec"></div>
<!-- pins -->
<svg class="abs" style="left:29px;top:468px" width="13" height="8" viewBox="0 0 13 8"><path d="M1 4 L4.5 4" stroke="#777" stroke-width="1.2"/><path d="M5 1 L5 7 M11 1.4 L11 6.6" stroke="#777" stroke-width="1.3"/><rect x="5.5" y="2.2" width="5.5" height="3.6" fill="#c8c8c8" stroke="#777" stroke-width="0.9"/></svg>
<svg class="abs" style="left:29px;top:489px" width="13" height="8" viewBox="0 0 13 8"><path d="M1 4 L4.5 4" stroke="#777" stroke-width="1.2"/><path d="M5 1 L5 7 M11 1.4 L11 6.6" stroke="#777" stroke-width="1.3"/><rect x="5.5" y="2.2" width="5.5" height="3.6" fill="#c8c8c8" stroke="#777" stroke-width="0.9"/></svg>

</div>
</body>
</html>
